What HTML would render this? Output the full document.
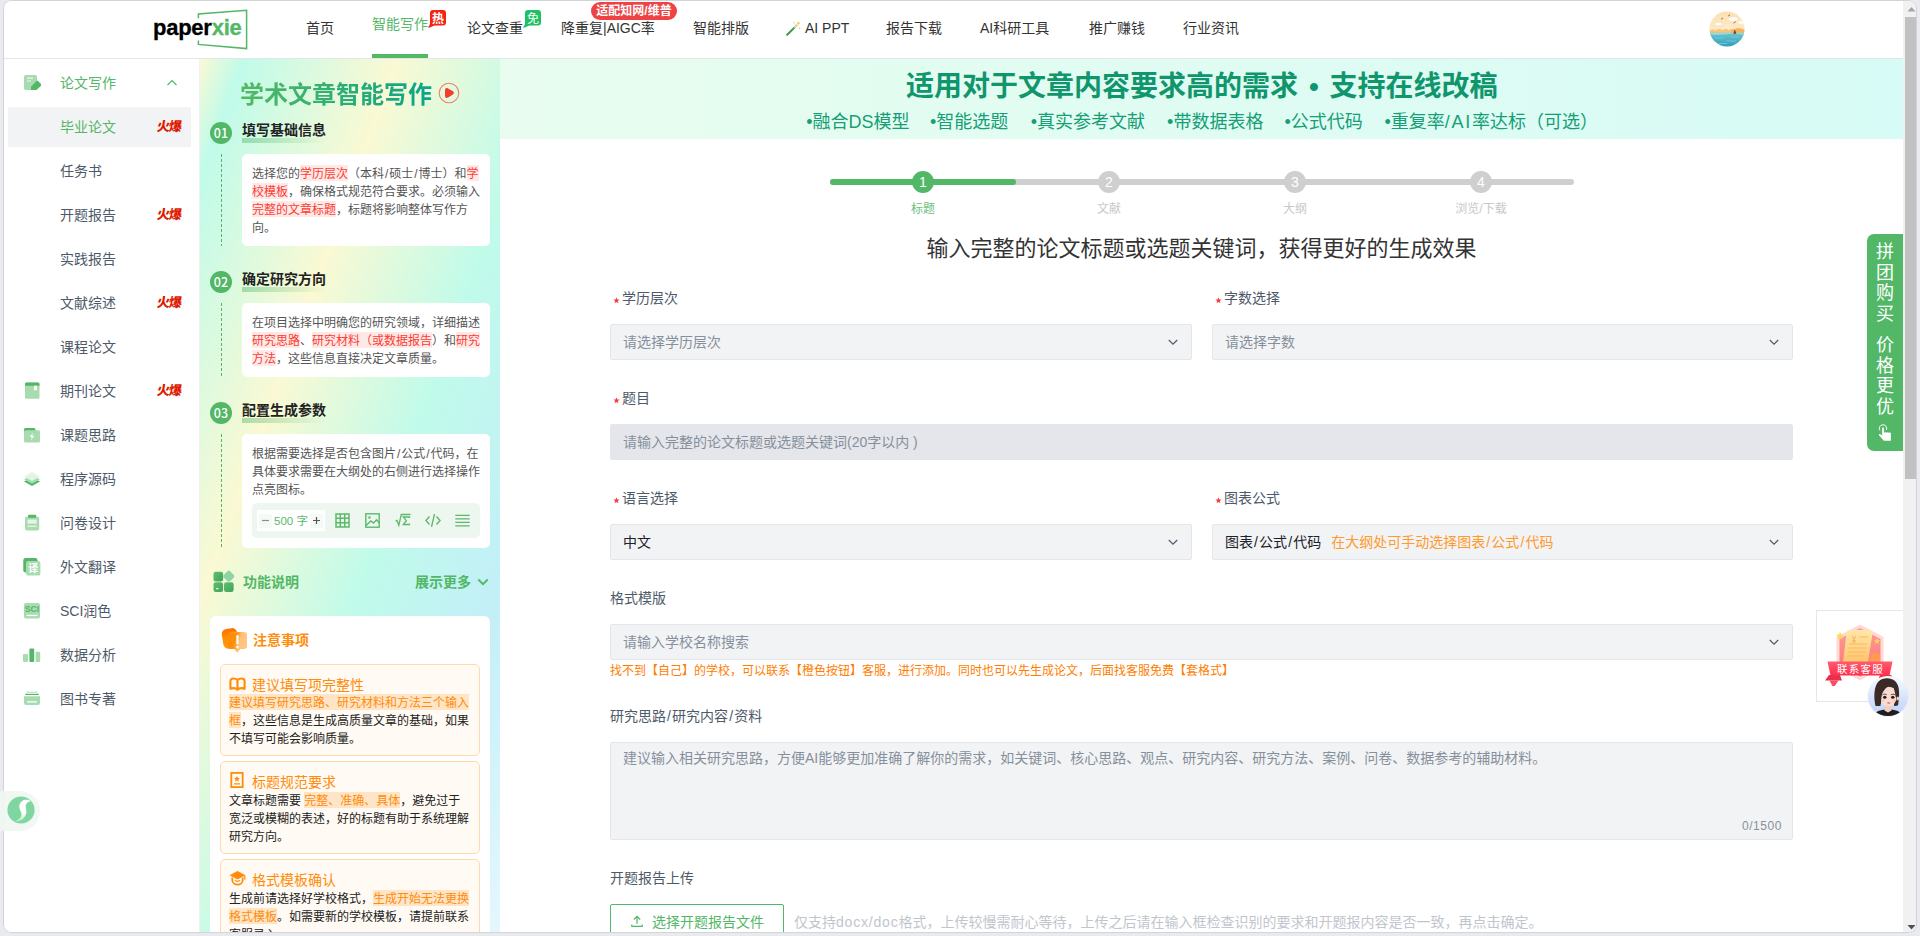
<!DOCTYPE html>
<html lang="zh-CN">
<head>
<meta charset="utf-8">
<title>paperxie - 学术文章智能写作</title>
<style>
*{box-sizing:border-box;margin:0;padding:0}
html,body{width:1920px;height:936px;overflow:hidden;background:#e8eaed}
body{font-family:"Liberation Sans","Noto Sans CJK SC",sans-serif;font-size:14px;color:#333;position:relative}
.win{position:absolute;left:4px;top:1px;width:1912px;height:931px;background:#fff;border-radius:8px;overflow:hidden;box-shadow:0 0 0 1px #d2d4d8}
.abs{position:absolute;left:-4px;top:-1px;width:1920px;height:936px}
.abs>*{position:absolute}
.t{white-space:nowrap;line-height:20px;height:20px}
/* header */
.hdr{left:4px;top:1px;width:1899px;height:58px;background:#fff;border-bottom:1px solid #e4e5ea}
.nav{top:18px;font-size:14px;color:#333}
.nav.on{top:14px;color:#55b768}
/* sidebar */
.side{left:4px;top:59px;width:196px;height:873px;background:#fff;border-right:1px solid #f0f1f3}
.m1{left:60px;font-size:14px;color:#4e5969}
.hot{left:156.500px;font-size:13px;font-weight:900;color:#dd1a00;letter-spacing:-1px;transform:skewX(-6deg)}
/* guide */
.guide{left:200px;top:59px;width:300px;height:874px;background:linear-gradient(110deg,#faf9d4 0%,#c0fbea 7%,#faf9d3 32%,#c0fbea 57%,#c3eff8 80%,#e6f7fd 100%)}

.gtitle{left:240px;top:78.500px;height:32px;line-height:32px;font-size:24px;font-weight:bold;white-space:nowrap;background:linear-gradient(90deg,#54b960 0%,#0aa38c 100%);-webkit-background-clip:text;background-clip:text;color:transparent}
.snum{left:210px;width:22px;height:22px;border-radius:11px;background:#52b766;color:#fff;font-size:12.500px;line-height:21px;text-align:center;font-family:"Noto Sans CJK SC","Liberation Sans",sans-serif;font-weight:500}
.stitle{left:242px;height:22px;line-height:22px;font-size:14px;font-weight:bold;color:#222;white-space:nowrap}
.sul{left:242px;width:84px;height:5px;background:linear-gradient(90deg,rgba(82,183,102,.45),rgba(82,183,102,0))}
.dash{left:221px;width:1px;background:repeating-linear-gradient(180deg,#52b766 0,#52b766 3px,transparent 3px,transparent 5px)}
.gcard{left:242px;width:248px;background:#fff;border-radius:5px;padding:11px 10px 9px;font-size:12px;line-height:18px;color:#555;white-space:nowrap}
.gcard b,.ncard b{font-weight:normal}
.gcard b{color:#fb3c33;background:#ffe9e7;padding-top:2px}
.ncard{left:220px;width:260px;background:#fffaf3;border:1px solid #ffd9ae;border-radius:5px;padding:8px;font-size:12px;line-height:18px;color:#222;white-space:nowrap}
.ncard b{color:#ff8c0a;background:#ffe5c8;padding-top:2px}
.ncard .h{font-size:14px;line-height:21px;height:21px;color:#ff8c0a;padding-left:23px;position:relative;top:2px}
.ncard .h svg{position:absolute;left:0;top:.300px}

.banner{left:500px;top:59px;width:1403px;height:80px;background:linear-gradient(90deg,#e8fdef 0%,#d7fbf6 100%)}
.btitle{left:500px;top:66px;width:1403px;height:40px;line-height:40px;text-align:center;font-size:28px;font-weight:bold;color:#0f966c;white-space:nowrap}
.bsub{top:108px;height:28px;line-height:28px;font-size:18px;color:#169e76;white-space:nowrap}
.pnum{top:171px;width:22px;height:22px;border-radius:11px;background:#cfcfcf;color:#fff;font-size:14px;line-height:22px;text-align:center}
.plab{top:199px;width:100px;height:20px;line-height:20px;font-size:12px;color:#c8c8c8;text-align:center;white-space:nowrap}
.lab{height:22px;line-height:22px;font-size:14px;color:#4e5969;white-space:nowrap}
.lab i{display:inline-block;width:12px;height:1px}
.inp{height:36px;line-height:34px;background:#f2f3f5;border:1px solid #e5e6eb;border-radius:2px;padding:0 12px;font-size:14px;color:#86909c;white-space:nowrap;overflow:hidden}
.chev{width:12px;height:12px}
.s{margin:0 .08em}
</style>
</head>
<body>
<div class="win"><div class="abs">
<div class="hdr"></div>
<div class="t" style="left:153px;top:13px;height:30px;line-height:30px;font-size:22px;font-weight:bold;color:#000;letter-spacing:-0.25px;-webkit-text-stroke:.300px" id="logo">paper<span style="color:#52b766">xie</span></div>
<svg style="left:190px;top:4px" width="64" height="52" viewBox="190 4 64 52"><path d="M198.4 18.2V14L246.6 10.3V48.6L198.4 44.4V40.6" fill="none" stroke="#52b766" stroke-width="1.5"/></svg>
<div class="t nav" style="left:306px">首页</div>
<div class="t nav on" style="left:372px">智能写作</div>
<div style="left:372px;top:54px;width:56px;height:4px;background:#52b766"></div>
<svg style="left:426px;top:9px" width="22" height="20" viewBox="0 0 22 20"><path d="M7 1h10a3 3 0 0 1 3 3v9.5a3 3 0 0 1-3 3H8.5C6 17.6 4 18.4 1.6 18.8 3.2 17.2 4 15.6 4 13.5V4a3 3 0 0 1 3-3z" fill="#f5230f"/></svg>
<div class="t" style="left:432px;top:10px;width:12px;font-size:12px;color:#fff;font-weight:bold;line-height:18px;height:18px">热</div>
<div class="t nav" style="left:467px">论文查重</div>
<svg style="left:521px;top:9px" width="22" height="20" viewBox="0 0 22 20"><path d="M7 1h10a3 3 0 0 1 3 3v9.5a3 3 0 0 1-3 3H8.5C6 17.6 4 18.4 1.6 18.8 3.2 17.2 4 15.6 4 13.5V4a3 3 0 0 1 3-3z" fill="#1fc164"/></svg>
<div class="t" style="left:527px;top:10px;width:12px;font-size:12px;color:#fff;line-height:18px;height:18px">免</div>
<div class="t nav" style="left:561px">降重复|AIGC率</div>
<div class="t" style="left:591px;top:2px;width:86px;height:18px;line-height:18px;border-radius:9px;background:#ee4245;color:#fff;font-size:12px;font-weight:bold;text-align:center">适配知网/维普</div>
<div class="t nav" style="left:693px">智能排版</div>
<svg style="left:786px;top:20px" width="16" height="16" viewBox="0 0 16 16"><path d="M1.2 14.8L10.4 5.6" stroke="#3f9a4c" stroke-width="2" stroke-linecap="round"/><path d="M9 7l1.6-1.6" stroke="#cfd8dc" stroke-width="2.2" stroke-linecap="round"/><path d="M12.5 1l.6 1.6 1.6.6-1.6.6-.6 1.6-.6-1.6-1.6-.6 1.6-.6zM8 1.4l.4 1 .9.3-.9.4-.4 1-.4-1-.9-.4.9-.3zM13.6 7l.4 1 .9.3-.9.4-.4 1-.4-1-.9-.4.9-.3z" fill="#f7c845"/></svg>
<div class="t nav" style="left:805px">AI PPT</div>
<div class="t nav" style="left:886px">报告下载</div>
<div class="t nav" style="left:980px">AI科研工具</div>
<div class="t nav" style="left:1089px">推广赚钱</div>
<div class="t nav" style="left:1183px">行业资讯</div>
<svg style="left:1709px;top:11px" width="36" height="36" viewBox="0 0 36 36"><defs><clipPath id="avc"><circle cx="18" cy="18" r="17.5"/></clipPath><linearGradient id="sky" x1="0" y1="0" x2="0" y2="1"><stop offset="0" stop-color="#fde0b0"/><stop offset="1" stop-color="#fdf1dc"/></linearGradient><linearGradient id="sea" x1="0" y1="0" x2="0" y2="1"><stop offset="0" stop-color="#6cc5cf"/><stop offset="1" stop-color="#2b9dbb"/></linearGradient></defs><g clip-path="url(#avc)"><rect width="36" height="36" fill="url(#sky)"/><circle cx="18" cy="17.5" r="4.5" fill="#fdebd0"/><ellipse cx="24" cy="8" rx="4.5" ry="1.8" fill="#fff"/><ellipse cx="9.5" cy="13" rx="3" ry="1.2" fill="#fff"/><ellipse cx="32" cy="11.5" rx="3" ry="1.2" fill="#fff"/><path d="M0 19.5c3-1.5 5-1.500 7 0 2-2 4.500-2 6.500-.3 2-1.700 4.500-1.700 6.500 0 2-1.500 4-1.500 5.500 0 2-2.500 6-3 10.500-.5V24H0z" fill="#f8c477"/><path d="M22 20c3-3 8-3.500 14-.5V24H22z" fill="#f5b25e"/><rect y="21.800" width="36" height="15" fill="url(#sea)"/><path d="M0 21.800h36v1.500c-6 .8-10-1-16-.3-7 .8-12 1.300-20 .3z" fill="#9adadb"/><path d="M24.300 22.800l1.500-4.300 1.600 4.300z" fill="#7c3a1d"/><path d="M6 27h9M17 30h10M10 32.500h8M22 26h8" stroke="#7fd0d8" stroke-width=".7"/><path d="M12.500 8l1.200-.9M19.500 4.800l1.300-.9M25 11.800l1.300-.9" stroke="#5a4a3a" stroke-width=".8" stroke-linecap="round"/></g></svg>

<div class="side"></div>
<div style="left:8px;top:107px;width:183px;height:40px;background:#f2f3f5;border-radius:2px"></div>
<svg style="left:23px;top:74px" width="18" height="18" viewBox="0 0 18 18"><rect x="1" y="1" width="13" height="15" rx="1.8" fill="#a8dcb0"/><path d="M4 4.2h6M4 7h4" stroke="#e9f7ec" stroke-width="1.2"/><path d="M8 16v-3.200l5.600-5.900a1 1 0 0 1 1.400 0l3.200 3.200a1 1 0 0 1 0 1.400L13.500 16z" fill="#52b766"/></svg>
<div class="t m1" style="top:73px;color:#52b766">论文写作</div>
<svg style="left:166px;top:77px" width="12" height="12" viewBox="0 0 12 12"><path d="M1.500 8L6 3.500 10.500 8" fill="none" stroke="#52b766" stroke-width="1.200"/></svg>
<div class="t m1" style="top:117px;color:#52b766">毕业论文</div>
<div class="t hot" style="top:117px">火爆</div>
<div class="t m1" style="top:161px;color:#4e5969">任务书</div>
<div class="t m1" style="top:205px;color:#4e5969">开题报告</div>
<div class="t hot" style="top:205px">火爆</div>
<div class="t m1" style="top:249px;color:#4e5969">实践报告</div>
<div class="t m1" style="top:293px;color:#4e5969">文献综述</div>
<div class="t hot" style="top:293px">火爆</div>
<div class="t m1" style="top:337px;color:#4e5969">课程论文</div>
<svg style="left:23px;top:382px" width="18" height="18" viewBox="0 0 18 18"><rect x="2" y=".5" width="14.500" height="16.300" rx="1.500" fill="#a8dcb0"/><path d="M2 3.700V2a1.500 1.500 0 0 1 1.500-1.500H15A1.500 1.500 0 0 1 16.500 2v1.700z" fill="#52b766"/><path d="M11 3.700h3v5l-1.500-1.200L11 8.700z" fill="#fff"/></svg>
<div class="t m1" style="top:381px;color:#4e5969">期刊论文</div>
<div class="t hot" style="top:381px">火爆</div>
<svg style="left:23px;top:426px" width="18" height="18" viewBox="0 0 18 18"><path d="M1 3.500A1.500 1.500 0 0 1 2.500 2h8.500a1.500 1.500 0 0 1 1.500 1.500V6H1z" fill="#52b766"/><rect x="1" y="4.300" width="16" height="12.300" rx="1.500" fill="#a8dcb0"/><path d="M9.800 6.800L6.800 11h2l-.8 3.200 3.200-4.400h-2z" fill="#fff"/></svg>
<div class="t m1" style="top:425px;color:#4e5969">课题思路</div>
<svg style="left:23px;top:470px" width="18" height="18" viewBox="0 0 18 18"><path d="M9 7l8 4.500L9 16 1 11.500z" fill="#52b766"/><path d="M9 4.800l8 4.500-8 4.500-8-4.500z" fill="#a8dcb0"/><path d="M9 2l8 4.500L9 11 1 6.500z" fill="#e3f4e6"/></svg>
<div class="t m1" style="top:469px;color:#4e5969">程序源码</div>
<svg style="left:23px;top:514px" width="18" height="18" viewBox="0 0 18 18"><rect x="2" y="2.500" width="14.200" height="14.100" rx="2" fill="#a8dcb0"/><rect x="5" y=".700" width="8.200" height="3" rx="1" fill="#52b766"/><rect x="4.500" y="5.600" width="9.200" height="4" fill="#e6f5e9"/><rect x="4.500" y="11.600" width="9.200" height="1.300" fill="#e6f5e9"/></svg>
<div class="t m1" style="top:513px;color:#4e5969">问卷设计</div>
<svg style="left:23px;top:558px" width="18" height="18" viewBox="0 0 18 18"><rect x=".300" y="0" width="14.200" height="14.500" rx="2.200" fill="#52b766"/><rect x="3" y="3" width="14.400" height="14.600" rx="2.200" fill="#a8dcb0"/><text x="10.200" y="13.800" font-size="10" font-weight="bold" fill="#fff" text-anchor="middle" font-family="Liberation Sans,Noto Sans CJK SC,sans-serif" >译</text></svg>
<div class="t m1" style="top:557px;color:#4e5969">外文翻译</div>
<svg style="left:23px;top:602px" width="18" height="18" viewBox="0 0 18 18"><rect x="1" y="1" width="16" height="15.600" rx="1.800" fill="#a8dcb0"/><text x="9" y="10" font-size="8.600" font-weight="bold" fill="#52b766" text-anchor="middle" font-family="Liberation Sans,sans-serif">SCI</text><rect x="3.500" y="12.800" width="11" height="1.300" fill="#fff"/></svg>
<div class="t m1" style="top:601px;color:#4e5969">SCI润色</div>
<svg style="left:23px;top:646px" width="18" height="18" viewBox="0 0 18 18"><rect x="0" y="8" width="5" height="8" rx="1" fill="#a8dcb0"/><rect x="6.400" y="2.400" width="4.800" height="13.600" rx="1" fill="#52b766"/><rect x="12.600" y="5.800" width="4.600" height="10.200" rx="1" fill="#a8dcb0"/></svg>
<div class="t m1" style="top:645px;color:#4e5969">数据分析</div>
<svg style="left:23px;top:690px" width="18" height="18" viewBox="0 0 18 18"><rect x="3.500" y="1.700" width="11" height="1" fill="#a8dcb0"/><rect x="2.200" y="3.800" width="13.600" height="1.200" fill="#52b766"/><path d="M1 6.200h16v6.800a2 2 0 0 1-2 2H3a2 2 0 0 1-2-2z" fill="#a8dcb0"/><rect x="4" y="11.300" width="10" height="1.300" rx=".600" fill="#fff"/></svg>
<div class="t m1" style="top:689px;color:#4e5969">图书专著</div>

<div class="guide"></div>
<div class="gtitle">学术文章智能写作</div>
<svg style="left:437px;top:81px" width="24" height="24" viewBox="0 0 24 24"><circle cx="12" cy="12" r="9.800" fill="none" stroke="#f47b6b" stroke-width="1.100"/><path d="M8 9.200c0-2 1.400-2.800 3.100-1.800l4.500 2.700c1.700 1 1.700 2.700 0 3.700l-4.500 2.700C9.400 17.500 8 16.700 8 14.700z" fill="#f63d2c"/></svg>
<div class="snum" style="top:122px">01</div>
<div class="sul" style="top:137.5px"></div>
<div class="stitle" style="top:119px">填写基础信息</div>
<div class="dash" style="top:154px;height:92px"></div>
<div class="gcard" style="top:154px;height:92px">选择您的<b>学历层次</b>（本科<span class="s">/</span>硕士<span class="s">/</span>博士）和<b>学</b><br><b>校模板</b>，确保格式规范符合要求。必须输入<br><b>完整的文章标题</b>，标题将影响整体写作方<br>向。</div>
<div class="snum" style="top:271px">02</div>
<div class="sul" style="top:286.5px"></div>
<div class="stitle" style="top:268px">确定研究方向</div>
<div class="dash" style="top:303px;height:74px"></div>
<div class="gcard" style="top:303px;height:74px">在项目选择中明确您的研究领域，详细描述<br><b>研究思路</b>、<b>研究材料（或数据报告</b>）和<b>研究</b><br><b>方法</b>，这些信息直接决定文章质量。</div>
<div class="snum" style="top:402px">03</div>
<div class="sul" style="top:417.5px"></div>
<div class="stitle" style="top:399px">配置生成参数</div>
<div class="dash" style="top:434px;height:114px"></div>
<div class="gcard" style="top:434px;height:114px">根据需要选择是否包含图片<span class="s">/</span>公式<span class="s">/</span>代码，在<br>具体要求需要在大纲处的右侧进行选择操作<br>点亮图标。</div>
<div style="left:252px;top:503px;width:228px;height:35px;border-radius:5px;background:#edf7ef"></div>
<div style="left:257px;top:510px;width:68px;height:21px;background:#fff"></div>
<div style="left:259px;top:513.500px;width:13px;height:14px;background:#f6faf7"></div>
<div style="left:310px;top:513.500px;width:13px;height:14px;background:#f6faf7"></div>
<svg style="left:259px;top:513px" width="64" height="15" viewBox="0 0 64 15"><path d="M3 7.500h7" stroke="#8a8f8c" stroke-width="1.200"/><path d="M54 7.500h7M57.500 4v7" stroke="#555" stroke-width="1.200"/></svg>
<div class="t" style="left:274px;top:510.500px;font-size:11.500px;color:#5cb96b">500 字</div>
<svg style="left:335px;top:513px" width="15" height="15" viewBox="0 0 15 15"><path d="M1 1h13v13H1zM1 5.300h13M1 9.700h13M5.300 1v13M9.700 1v13" fill="none" stroke="#5cb96b" stroke-width="1.500"/></svg>
<svg style="left:364.500px;top:513px" width="15" height="15" viewBox="0 0 15 15"><rect x=".800" y=".800" width="13.400" height="13.400" fill="none" stroke="#5cb96b" stroke-width="1.400"/><circle cx="4.500" cy="4.500" r="1.200" fill="#5cb96b"/><path d="M1 12.500l5-4.500 2.500 2 3-3.200 2.700 3" fill="none" stroke="#5cb96b" stroke-width="1.400"/></svg>
<svg style="left:394.500px;top:513px" width="16" height="15" viewBox="0 0 16 15"><path d="M.500 8.300l1.500-.800 1.800 4.800L6.300 1.500H15.500" fill="none" stroke="#5cb96b" stroke-width="1.300"/><path d="M14.500 5V4H8.300l3 3.700-3 3.800h6.200v-1" fill="none" stroke="#5cb96b" stroke-width="1.300"/></svg>
<svg style="left:424.500px;top:513px" width="16" height="15" viewBox="0 0 16 15"><path d="M4.500 3.500L.900 7.500l3.600 4M11.500 3.500l3.600 4-3.600 4M9.500 1.200L6.500 13.800" fill="none" stroke="#5cb96b" stroke-width="1.400"/></svg>
<svg style="left:455px;top:513px" width="15" height="15" viewBox="0 0 15 15"><path d="M.300 2.300h14.400M.300 5.800h14.400M.300 9.300h14.400M.300 12.800h14.400" stroke="#5cb96b" stroke-width="1.300"/></svg>
<svg style="left:213px;top:570px" width="23" height="23" viewBox="0 0 23 23"><defs><linearGradient id="fg" x1="0" y1="0" x2="1" y2="1"><stop offset="0" stop-color="#62bd72"/><stop offset="1" stop-color="#3ea457"/></linearGradient></defs><rect x=".500" y="1.800" width="9.600" height="9.600" rx="2.200" fill="url(#fg)"/><rect x=".500" y="12.300" width="9.600" height="9.600" rx="2.200" fill="url(#fg)"/><rect x="11" y="12.300" width="9.600" height="9.600" rx="2.200" fill="url(#fg)"/><rect x="11.300" y="1.700" width="9" height="9" rx="2.200" transform="rotate(45 15.800 6.200)" fill="#8fd5a3"/><rect x="3" y="18.200" width="2.600" height="1" fill="#fff"/></svg>
<div class="t" style="left:243px;top:572px;font-weight:bold;color:#52b766">功能说明</div>
<div class="t" style="left:415px;top:572px;font-weight:bold;color:#52b766">展示更多</div>
<svg style="left:477px;top:577px" width="12" height="10" viewBox="0 0 12 10"><path d="M1.300 2.500L6 7.200l4.700-4.700" fill="none" stroke="#52b766" stroke-width="1.800"/></svg>
<div style="left:210px;top:616px;width:280px;height:330px;background:#fff;border-radius:6px"></div>
<svg style="left:221px;top:627px" width="27" height="27" viewBox="0 0 27 27"><defs><linearGradient id="nb" x1="0" y1="0" x2="0" y2="1"><stop offset="0" stop-color="#ff7000"/><stop offset=".4" stop-color="#ff8c00"/><stop offset="1" stop-color="#ff9a1a"/></linearGradient><linearGradient id="nf" x1="0" y1="0" x2="1" y2=".3"><stop offset="0" stop-color="#ff8a00"/><stop offset=".45" stop-color="#ff8f0a"/><stop offset=".7" stop-color="#ffc27a"/><stop offset="1" stop-color="#ffc684"/></linearGradient></defs><rect x="1.500" y="1.500" width="15.500" height="20" rx="5" transform="rotate(-9 9 11.500)" fill="url(#nb)"/><path d="M10 5h13a3 3 0 0 1 3 3v11a3 3 0 0 1-3 3h-3.600l-3 3.800-3-3.800H10a3 3 0 0 1-3-3V8a3 3 0 0 1 3-3z" fill="url(#nf)"/><path d="M10 5.300h6" stroke="#ffb35c" stroke-width=".6" fill="none"/><rect x="15.300" y="8" width="2.300" height="9.600" rx="1.150" fill="#fff"/><circle cx="16.450" cy="20" r="1.350" fill="#fff"/></svg>
<div class="t" style="left:253px;top:630px;font-weight:bold;color:#ff8c0a">注意事项</div>
<div class="ncard" style="top:664px;height:91.5px"><div class="h"><svg width="17" height="15" viewBox="0 0 17 15" style="top:.800px"><path d="M8.500 4.300C7.600 2.900 6.200 2.500 4.500 2.500 2.400 2.500 1.400 3.500 1.400 5.200v7.600c.9-.5 1.900-.7 3.100-.7 1.600 0 2.900.5 4 1.500 1.100-1 2.400-1.500 4-1.500 1.200 0 2.200.2 3.100.7V5.200c0-1.700-1-2.700-3.100-2.700-1.700 0-3.100.4-4 1.800zM8.500 4.300v9" fill="none" stroke="#ff8c0a" stroke-width="2.100" stroke-linejoin="round"/></svg>建议填写项完整性</div><div style="position:relative;top:0px"><b>建议填写研究思路、研究材料和方法三个输入</b><br><b>框</b>，这些信息是生成高质量文章的基础，如果<br>不填写可能会影响质量。</div></div>
<div class="ncard" style="top:761.200px;height:92.500px"><div class="h"><svg width="17" height="16" viewBox="0 0 17 16"><rect x="2.300" y=".900" width="11.400" height="14.200" fill="none" stroke="#ff8c0a" stroke-width="1.800"/><path d="M8 4l.9 1.800 2 .3-1.450 1.400.35 2L8 8.600l-1.800.9.350-2L5.100 6.100l2-.3z" fill="#ff8c0a"/><path d="M5 11.800h6" stroke="#ff8c0a" stroke-width="1.200"/></svg>标题规范要求</div><div style="position:relative;top:1px">文章标题需要 <b>完整、准确、具体</b>，避免过于<br>宽泛或模糊的表述，好的标题有助于系统理解<br>研究方向。</div></div>
<div class="ncard" style="top:859.200px;height:92.500px"><div class="h"><svg width="17" height="16" viewBox="0 0 17 16"><path d="M8.500 1L16.500 5.300 8.500 9.600.5 5.300z" fill="#ff8c0a"/><path d="M3.300 7.500v2.800c0 2.400 2.300 4.400 5.200 4.400s5.200-2 5.200-4.400V7.500" fill="none" stroke="#ff8c0a" stroke-width="1.800"/><path d="M6 10.300c1.500 1.200 3.500 1.200 5 0" fill="none" stroke="#ff8c0a" stroke-width="1.300"/><path d="M15.800 5.500v4" stroke="#ff8c0a" stroke-width="1.300"/></svg>格式模板确认</div><div style="position:relative;top:1px">生成前请选择好学校格式，<b>生成开始无法更换</b><br><b>格式模板</b>。如需要新的学校模板，请提前联系<br>客服录入。</div></div>

<div class="banner"></div>
<div class="btitle" style="left:906px;width:auto;top:67px">适用对于文章内容要求高的需求</div><div class="btitle" style="left:1305px;width:18px;top:67px">•</div><div class="btitle" style="left:1329.600px;width:auto;top:67px">支持在线改稿</div>
<div class="bsub" style="left:806.2px">•融合DS模型</div><div class="bsub" style="left:930px">•智能选题</div><div class="bsub" style="left:1030.7px">•真实参考文献</div><div class="bsub" style="left:1167.1px">•带数据表格</div><div class="bsub" style="left:1284.4px">•公式代码</div><div class="bsub" style="left:1384.5px">•重复率<span style="letter-spacing:1.700px">/AI</span>率达标（可选）</div>
<div style="left:830px;top:179px;width:744px;height:6px;border-radius:3px;background:#cfcfcf"></div>
<div style="left:830px;top:179px;width:186px;height:6px;border-radius:3px;background:#52b766"></div>
<div class="pnum" style="left:912px;background:#52b766">1</div>
<div class="pnum" style="left:1098px">2</div>
<div class="pnum" style="left:1284px">3</div>
<div class="pnum" style="left:1470px">4</div>
<div class="plab" style="left:873px;color:#6cc07c">标题</div>
<div class="plab" style="left:1059px">文献</div>
<div class="plab" style="left:1245px">大纲</div>
<div class="plab" style="left:1431px">浏览/下载</div>
<div class="t" style="left:500px;top:233px;width:1403px;height:32px;line-height:32px;font-size:22px;color:#333;text-align:center">输入完整的论文标题或选题关键词，获得更好的生成效果</div>
<div class="lab" style="left:610px;top:287px"><i><svg width="7" height="7" viewBox="0 0 7 7" style="position:absolute;left:2.500px;top:9.500px"><polygon points="3.50,0.30 4.35,2.43 6.64,2.58 4.88,4.05 5.44,6.27 3.50,5.05 1.56,6.27 2.12,4.05 0.36,2.58 2.65,2.43" fill="#f53f3f"/></svg></i>学历层次</div>
<div class="lab" style="left:1212px;top:287px"><i><svg width="7" height="7" viewBox="0 0 7 7" style="position:absolute;left:2.500px;top:9.500px"><polygon points="3.50,0.30 4.35,2.43 6.64,2.58 4.88,4.05 5.44,6.27 3.50,5.05 1.56,6.27 2.12,4.05 0.36,2.58 2.65,2.43" fill="#f53f3f"/></svg></i>字数选择</div>
<div class="inp" style="left:610px;top:324px;width:582px">请选择学历层次</div>
<svg class="chev" style="left:1167px;top:336px" viewBox="0 0 12 12"><path d="M1.800 4l4.200 4.200L10.200 4" fill="none" stroke="#4e5969" stroke-width="1.200"/></svg>
<div class="inp" style="left:1212px;top:324px;width:581px">请选择字数</div>
<svg class="chev" style="left:1768px;top:336px" viewBox="0 0 12 12"><path d="M1.800 4l4.200 4.200L10.200 4" fill="none" stroke="#4e5969" stroke-width="1.200"/></svg>
<div class="lab" style="left:610px;top:387px"><i><svg width="7" height="7" viewBox="0 0 7 7" style="position:absolute;left:2.500px;top:9.500px"><polygon points="3.50,0.30 4.35,2.43 6.64,2.58 4.88,4.05 5.44,6.27 3.50,5.05 1.56,6.27 2.12,4.05 0.36,2.58 2.65,2.43" fill="#f53f3f"/></svg></i>题目</div>
<div class="inp" style="left:610px;top:424px;width:1183px;background:#e5e6eb;border-color:#e5e6eb">请输入完整的论文标题或选题关键词(20字以内 )</div>
<div class="lab" style="left:610px;top:487px"><i><svg width="7" height="7" viewBox="0 0 7 7" style="position:absolute;left:2.500px;top:9.500px"><polygon points="3.50,0.30 4.35,2.43 6.64,2.58 4.88,4.05 5.44,6.27 3.50,5.05 1.56,6.27 2.12,4.05 0.36,2.58 2.65,2.43" fill="#f53f3f"/></svg></i>语言选择</div>
<div class="lab" style="left:1212px;top:487px"><i><svg width="7" height="7" viewBox="0 0 7 7" style="position:absolute;left:2.500px;top:9.500px"><polygon points="3.50,0.30 4.35,2.43 6.64,2.58 4.88,4.05 5.44,6.27 3.50,5.05 1.56,6.27 2.12,4.05 0.36,2.58 2.65,2.43" fill="#f53f3f"/></svg></i>图表公式</div>
<div class="inp" style="left:610px;top:524px;width:582px;color:#1d2129">中文</div>
<svg class="chev" style="left:1167px;top:536px" viewBox="0 0 12 12"><path d="M1.800 4l4.200 4.200L10.200 4" fill="none" stroke="#4e5969" stroke-width="1.200"/></svg>
<div class="inp" style="left:1212px;top:524px;width:581px;color:#1d2129">图表<span class="s">/</span>公式<span class="s">/</span>代码<span style="color:#ff9a2e;margin-left:10px">在大纲处可手动选择图表<span class="s">/</span>公式<span class="s">/</span>代码</span></div>
<svg class="chev" style="left:1768px;top:536px" viewBox="0 0 12 12"><path d="M1.800 4l4.200 4.200L10.200 4" fill="none" stroke="#4e5969" stroke-width="1.200"/></svg>
<div class="lab" style="left:610px;top:587px">格式模版</div>
<div class="inp" style="left:610px;top:624px;width:1183px">请输入学校名称搜索</div>
<svg class="chev" style="left:1768px;top:636px" viewBox="0 0 12 12"><path d="M1.800 4l4.200 4.200L10.200 4" fill="none" stroke="#4e5969" stroke-width="1.200"/></svg>
<div class="t" style="left:610px;top:661px;font-size:12px;color:#ff7d00">找不到【自己】的学校，可以联系【橙色按钮】客服，进行添加。同时也可以先生成论文，后面找客服免费【套格式】</div>
<div class="lab" style="left:610px;top:705px">研究思路<span class="s">/</span>研究内容<span class="s">/</span>资料</div>
<div class="inp" style="left:610px;top:742px;width:1183px;height:98px;line-height:22px;padding-top:4px">建议输入相关研究思路，方便AI能够更加准确了解你的需求，如关键词、核心思路、观点、研究内容、研究方法、案例、问卷、数据参考的辅助材料。</div>
<div class="t" style="left:1700px;top:816px;width:82px;text-align:right;font-size:12px;letter-spacing:.550px;color:#86909c">0/1500</div>
<div class="lab" style="left:610px;top:867px">开题报告上传</div>
<div style="left:610px;top:904px;width:174px;height:36px;border:1px solid #52b766;border-radius:2px"></div>
<svg style="left:630px;top:914px" width="14" height="14" viewBox="0 0 14 14"><path d="M7 9.800V2.500M3.800 5.500L7 2.300l3.200 3.200M1.800 10.500v1.800h10.400v-1.800" fill="none" stroke="#52b766" stroke-width="1.200"/></svg>
<div class="t" style="left:652px;top:912px;color:#52b766">选择开题报告文件</div>
<div class="t" style="left:794px;top:912px;color:#c1c5cd">仅支持<span style="letter-spacing:.800px">docx/doc</span>格式，上传较慢需耐心等待，上传之后请在输入框检查识别的要求和开题报内容是否一致，再点击确定。</div>

<div style="left:1816px;top:610px;width:88px;height:92px;border:1px solid #e6e6e6;background:#fff"></div>
<svg style="left:1822px;top:620px" width="76" height="66" viewBox="0 0 76 66"><defs><linearGradient id="hx" x1="0" y1="0" x2="0" y2="1"><stop offset="0" stop-color="#ff9d8f"/><stop offset="1" stop-color="#ff6f7d"/></linearGradient><linearGradient id="pp" x1="0" y1="0" x2="0" y2="1"><stop offset="0" stop-color="#ffe7a8"/><stop offset="1" stop-color="#ffc670"/></linearGradient><linearGradient id="rb" x1="0" y1="0" x2="0" y2="1"><stop offset="0" stop-color="#ff5a6e"/><stop offset="1" stop-color="#ff2f4e"/></linearGradient></defs>
<path d="M38 4.500L61.500 17v30L38 60.500 14.500 47V17z" fill="#ffd9d3"/><path d="M38 8L58.500 19v26L38 56.500 17.500 45V19z" fill="url(#hx)"/>
<path d="M50 34c4-2 8-1 8 3.500v4.500H46z" fill="#ff9a4e"/><path d="M27 10h21c2 0 3 1 2.600 3L46 42H21l3.500-29c.2-2 1-3 2.500-3z" fill="url(#pp)"/><path d="M30 16l2 3 2-3M32 19v5M30 21h4" stroke="#f5a94a" stroke-width=".9" fill="none"/><path d="M37 17h9M27 24h18M26.500 28h18M26 32h18M25.500 36h17" stroke="#f9b85c" stroke-width="1"/>
<path d="M18 12l1.200 2.500 2.700.4-2 1.900.5 2.700-2.400-1.300-2.400 1.300.5-2.700-2-1.900 2.700-.4zM55 18l.9 1.900 2.100.3-1.500 1.500.4 2.100-1.900-1-1.900 1 .4-2.100-1.500-1.500 2.100-.3z" fill="#ffd75a"/>
<path d="M7 55l-4 5.500h17l-2-5.500z" fill="#e8304c"/><path d="M69 55l4 5.500H56l2-5.500z" fill="#e8304c"/><path d="M7.500 60.500l4 7.500 5-7.500z" fill="#ff4a64"/>
<path d="M5.500 41.500h65l-3 14h-59z" fill="url(#rb)"/>
<text x="38.500" y="53" font-size="10.500" letter-spacing="1.300" fill="#fff" text-anchor="middle" font-family="Liberation Sans,Noto Sans CJK SC,sans-serif">联系客服</text></svg>
<div style="left:1867px;top:234px;width:36px;height:217px;background:#52b766;border-radius:7px 0 0 7px"></div>
<div style="left:1876px;top:241.800px;width:18px;font-size:18px;line-height:20.800px;color:#fff;text-align:center">拼<br>团<br>购<br>买</div>
<div style="left:1876px;top:335.300px;width:18px;font-size:18px;line-height:20.500px;color:#fff;text-align:center">价<br>格<br>更<br>优</div>
<svg style="left:1877px;top:424px" width="16" height="18" viewBox="0 0 16 18"><path d="M2.800 6.300a3.700 3.700 0 1 1 6.600-.3" fill="none" stroke="#fff" stroke-width="1"/><path d="M5.100 4.600c0-1.400 2-1.400 2 0v4.200l1-.6c.5-.2 1 .1 1.100.5l.9-.4c.5-.2 1 .1 1.100.5l.8-.3c.8-.2 1.900.1 1.900 1.300v6.900H6.800L2 11.300c-.6-.8.300-1.600 1.100-1.200l2 1.400z" fill="#fff"/></svg>
<div style="left:1903px;top:1px;width:14px;height:931px;background:#f1f1f1"></div>
<div style="left:1905px;top:17px;width:11px;height:462px;background:#c1c1c1"></div>
<svg style="left:1905px;top:4px" width="12" height="10" viewBox="0 0 12 10"><path d="M2.500 7.500L6.500 3l4 4.500z" fill="#a3a3a3"/></svg>
<svg style="left:1905px;top:921px" width="12" height="10" viewBox="0 0 12 10"><path d="M2.500 4L6.500 8.500l4-4.500z" fill="#505050"/></svg>

<svg style="left:1866px;top:674px" width="44" height="44" viewBox="0 0 44 44"><defs><linearGradient id="avg" x1="0" y1="0" x2="0" y2="1"><stop offset="0" stop-color="#f7faff"/><stop offset="1" stop-color="#b9d2fb"/></linearGradient><clipPath id="avc2"><circle cx="22" cy="22" r="20"/></clipPath></defs><circle cx="22" cy="22.500" r="20.500" fill="#dfe6f2" opacity=".6"/><circle cx="22" cy="22" r="20" fill="url(#avg)"/><g clip-path="url(#avc2)"><path d="M8 41c2-4 7-5.500 14-5.500s12 1.500 14 5.500v4H8z" fill="#1f1d1f"/><path d="M18.500 30h7v6.500l-3.500 2-3.500-2z" fill="#f3cdbd"/><path d="M9.500 32c-2-9-1.500-20 3-24.500 4-4 12-4.500 16.500-.5 4 3.500 4.500 10 4 17l-1 7.500-4 .5V14l-12-2-1.500 20z" fill="#3b2a26"/><ellipse cx="22.500" cy="22.500" rx="8.300" ry="9.800" fill="#f8dccf"/><path d="M12.500 22c0-8 3-13 9-13.500 3-.2 5 .5 6 2-5 1-9 4-11 8.500-.8 2-1.500 6-1.500 10.500l-2 1.500z" fill="#3b2a26"/><path d="M26 10c3 1 5.500 5 5.500 11l-.5 6-1.500-5c-.5-4-1.500-8-3.500-12z" fill="#3b2a26"/><ellipse cx="18.800" cy="23.300" rx="1.700" ry="1.500" fill="#2a1c1a"/><ellipse cx="26.800" cy="23.300" rx="1.700" ry="1.500" fill="#2a1c1a"/><path d="M16.500 20.800c1.300-.8 3-.8 4.300 0M24.800 20.800c1.300-.8 3-.8 4.300 0" stroke="#3b2a26" stroke-width=".8" fill="none"/><ellipse cx="22.800" cy="29" rx="1.700" ry=".9" fill="#e58a8a"/><ellipse cx="17" cy="26.500" rx="1.800" ry="1" fill="#f7bfb8" opacity=".7"/><ellipse cx="28.500" cy="26.500" rx="1.800" ry="1" fill="#f7bfb8" opacity=".7"/><ellipse cx="31.800" cy="24.500" rx="1.300" ry="2" fill="#f3cdbd"/></g></svg>
</div></div>
<div style="position:absolute;left:0;top:791px;width:40px;height:40px;border-radius:0 20px 20px 0;background:rgba(240,247,243,.92)"></div>
<svg style="position:absolute;left:6.600px;top:796.200px" width="28" height="28" viewBox="0 0 28 28"><defs><linearGradient id="sw" x1="0" y1="0" x2="0" y2="1"><stop offset="0" stop-color="#fff"/><stop offset=".6" stop-color="#fff"/><stop offset="1" stop-color="#b5eec6"/></linearGradient></defs><circle cx="14" cy="14" r="13.600" fill="#7fd6a0"/><path d="M23.700 5.200C19.500 2.200 13.500 4 12.400 9.200 11.600 13 14.600 15.300 14.500 18.600 14.400 21.800 11.500 24.200 8 25.400c5 .6 10.600-3.200 11.300-8.400.5-3.500-1.200-5.400-.4-8.200.7-2.200 2.500-3.300 4.800-3.600z" fill="url(#sw)"/></svg>
</body>
</html>
